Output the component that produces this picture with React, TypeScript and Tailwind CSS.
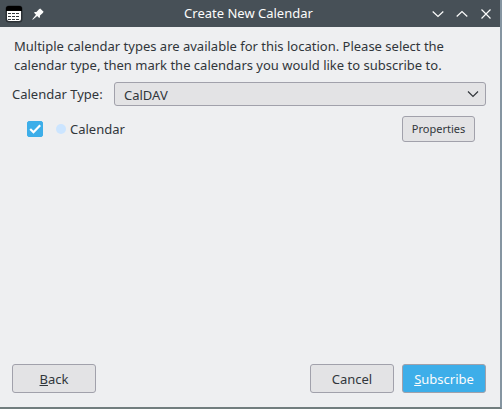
import { useState } from "react";

const CALENDAR_TYPES = ["CalDAV", "iCalendar (ICS)"];

const CALENDARS = [{ id: "calendar", name: "Calendar", color: "bg-[#cce5ff]" }];

const BUTTON =
  "h-[29px] w-[84px] rounded-[3px] border border-[#a1a1ab] pt-px text-[13px] leading-[19px]";

function CalendarIcon() {
  return (
    <svg width="18" height="18" viewBox="0 0 18 18" aria-hidden="true">
      <rect x="0.5" y="0.5" width="17" height="17" rx="3.5" fill="#2b3035" />
      <path d="M1 6V3.500A2.500 2.500 0 0 1 3.500 1h11A2.500 2.500 0 0 1 17 3.500V6z" fill="#000" />
      <path d="M2 6h14v8a2 2 0 0 1-2 2H4a2 2 0 0 1-2-2z" fill="#fff" />
      <g fill="#33383c">
        <path d="M3 8h3v1H3zM7 8h3v1H7zM11 8h3v1h-3z" />
        <path d="M3 11h3v1H3zM7 11h3v1H7zM11 11h3v1h-3z" />
        <path d="M3 14h3v1H3zM7 14h3v1H7zM11 14h3v1h-3z" />
      </g>
    </svg>
  );
}

function PinIcon() {
  return (
    <svg width="12" height="12" viewBox="0 0 12 12" aria-hidden="true">
      <path
        d="M8.200 0.400L11.600 3.800L10.800 5L8 7.600L7.900 9.300L7.200 9.900L5.200 8L0.800 11.700L0.300 11.200L4 6.800L2.100 4.800L2.700 4.100L4.400 4L7 1.200Z"
        fill="#fcfcfc"
      />
    </svg>
  );
}

function TitleGlyph({ d }: { d: string }) {
  return (
    <svg width="12" height="12" viewBox="0 0 12 12" fill="none" aria-hidden="true">
      <path d={d} stroke="#fcfcfc" strokeWidth="1.200" />
    </svg>
  );
}

function TitleBar() {
  return (
    <header className="grid h-[27px] grid-cols-[1fr_auto_1fr] items-center bg-[#475057] pr-2 pl-[5px] text-[#fcfcfc]">
      <div className="flex items-center gap-[9px]">
        <CalendarIcon />
        <button type="button" aria-label="Keep on all desktops">
          <PinIcon />
        </button>
      </div>
      <h1 className="text-[13px] leading-[19px]">Create New Calendar</h1>
      <div className="flex items-center justify-end gap-3">
        <button type="button" aria-label="Minimize">
          <TitleGlyph d="M0.700 3.500L6 8.500L11.300 3.500" />
        </button>
        <button type="button" aria-label="Maximize">
          <TitleGlyph d="M0.700 8.500L6 3.500L11.300 8.500" />
        </button>
        <button type="button" aria-label="Close">
          <TitleGlyph d="M1.500 1.500L10.500 10.500M10.500 1.500L1.500 10.500" />
        </button>
      </div>
    </header>
  );
}

export default function App() {
  const [type, setType] = useState(CALENDAR_TYPES[0]);
  const [selected, setSelected] = useState<string[]>(["calendar"]);

  const toggle = (id: string) =>
    setSelected((prev) =>
      prev.includes(id) ? prev.filter((item) => item !== id) : [...prev, id]
    );

  return (
    <div className="flex min-h-screen flex-col border-r-2 border-b-2 border-r-[#8595a1] border-b-[#717d7e] bg-[#eeeff1] font-['Noto_Sans',sans-serif] text-[13px] leading-[19px] text-[#31363b]">
      <TitleBar />

      <main className="flex flex-1 flex-col px-3 pt-[10px] pb-[14px]">
        <p className="px-[2px]">
          Multiple calendar types are available for this location. Please select the
          calendar type, then mark the calendars you would like to subscribe to.
        </p>

        <div className="mt-[7px] flex items-center gap-2 pr-[2px]">
          <label htmlFor="calendar-type" className="w-[94px] whitespace-nowrap">
            Calendar Type:
          </label>
          <div className="relative flex-1">
            <select
              id="calendar-type"
              value={type}
              onChange={(e) => setType(e.target.value)}
              className="block h-6 w-full appearance-none rounded-[3px] border border-[#a1a1ab] bg-[#e3e3e5] px-[9px] pt-[2px]"
            >
              {CALENDAR_TYPES.map((item) => (
                <option key={item}>{item}</option>
              ))}
            </select>
            <svg
              className="pointer-events-none absolute top-[6px] right-[7px]"
              width="12"
              height="12"
              viewBox="0 0 12 12"
              fill="none"
              aria-hidden="true"
            >
              <path d="M1 3.500L6 8.500L11 3.500" stroke="#31363b" strokeWidth="1.200" />
            </svg>
          </div>
        </div>

        <ul className="mt-[10px] pr-[13px] pl-[15px]">
          {CALENDARS.map((item) => (
            <li key={item.id} className="flex items-center justify-between">
              <label className="flex items-center">
                <span className="relative mr-[13px] size-4">
                  <input
                    type="checkbox"
                    checked={selected.includes(item.id)}
                    onChange={() => toggle(item.id)}
                    className="peer block size-4 appearance-none rounded-[2px] border border-[#a1a1ab] checked:border-[#3daee9] checked:bg-[#3daee9]"
                  />
                  <svg
                    className="pointer-events-none absolute inset-0 hidden peer-checked:block"
                    width="16"
                    height="16"
                    viewBox="0 0 16 16"
                    fill="none"
                    aria-hidden="true"
                  >
                    <path d="M3.200 8L6.500 11.300L13.200 4.300" stroke="#fff" strokeWidth="2.200" />
                  </svg>
                </span>
                <span className={`mr-1 size-[10px] rounded-full ${item.color}`} />
                {item.name}
              </label>
              <button
                type="button"
                className="h-[26px] w-[73px] rounded-[3px] border border-[#a1a1ab] bg-[#e3e3e5] text-[11px] leading-4"
              >
                Properties
              </button>
            </li>
          ))}
        </ul>

        <footer className="mt-auto flex items-center gap-2 pr-[2px]">
          <button type="button" className={`${BUTTON} mr-auto bg-[#e3e3e5]`}>
            <u>B</u>ack
          </button>
          <button type="button" className={`${BUTTON} bg-[#e3e3e5]`}>
            Cancel
          </button>
          <button type="button" className={`${BUTTON} bg-[#3daee9] text-[#fcfcfc]`}>
            <u>S</u>ubscribe
          </button>
        </footer>
      </main>
    </div>
  );
}
